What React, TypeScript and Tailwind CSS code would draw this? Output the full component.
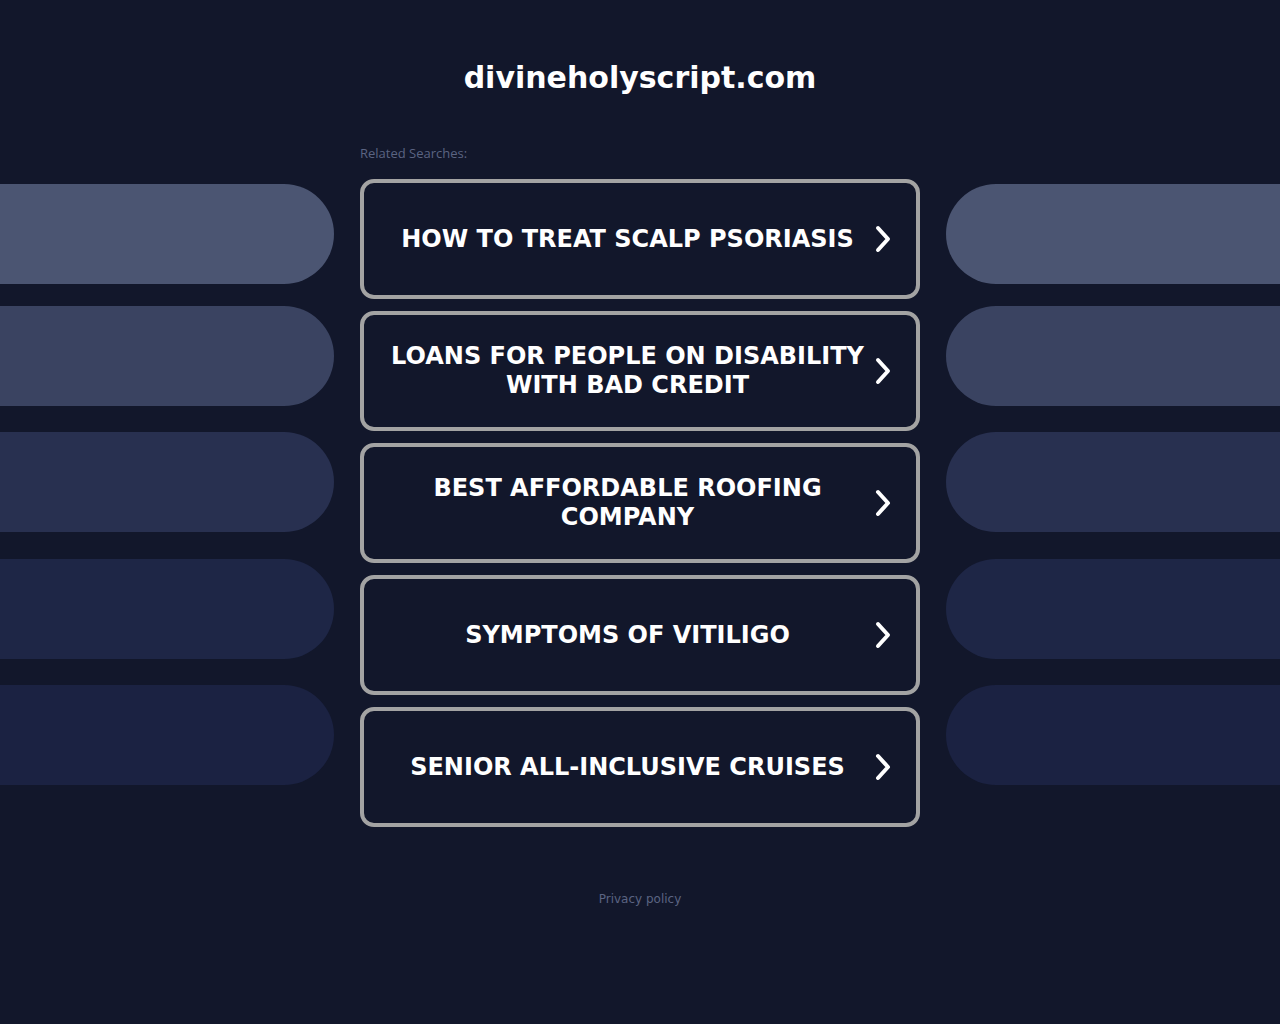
const searches = [
  "HOW TO TREAT SCALP PSORIASIS",
  "LOANS FOR PEOPLE ON DISABILITY WITH BAD CREDIT",
  "BEST AFFORDABLE ROOFING COMPANY",
  "SYMPTOMS OF VITILIGO",
  "SENIOR ALL-INCLUSIVE CRUISES",
];

const pills = [
  "bg-[#4b5572] mt-[4px]",
  "bg-[#3a4361] mt-[22px]",
  "bg-[#283050] mt-[26px]",
  "bg-[#1e2646] mt-[27px]",
  "bg-[#1b2242] mt-[26px]",
];

const Chevron = () => (
  <svg width="20" height="30" viewBox="0 0 20 30" className="shrink-0">
    <polyline
      points="5,4 15,15 5,26"
      fill="none"
      stroke="white"
      strokeWidth="4"
      strokeLinecap="round"
      strokeLinejoin="round"
    />
  </svg>
);

export default function App() {
  return (
    <div
      className="min-h-[1024px] w-full bg-[#12172b] text-white"
      style={{ fontFamily: "'DejaVu Sans', sans-serif" }}
    >
      <h1 className="pt-[59px] text-center text-[30px] font-bold leading-[38px]">
        divineholyscript.com
      </h1>
      <div className="mt-[52px] flex flex-row items-start gap-[26px]">
        <div className="flex w-[334px] flex-col pt-[31px]">
          {pills.map((c, i) => (
            <div key={i} className={`h-[100px] rounded-r-[50px] ${c}`} />
          ))}
        </div>
        <div className="flex w-[560px] flex-col">
          <div className="-mt-[3px] h-[33px] font-['Open_Sans',sans-serif] text-[13px] leading-[14px] text-[#5b6482]">
            Related Searches:
          </div>
          <div className="flex flex-col gap-[12px]">
            {searches.map((s) => (
              <a
                key={s}
                href="#"
                className="flex h-[120px] flex-row items-center rounded-[14px] border-4 border-[#a3a3a3] pl-[21px] pr-[23px]"
              >
                <span className="flex-1 text-center text-[24px] font-bold leading-[29px]">
                  {s}
                </span>
                <span className="ml-[3px]">
                  <Chevron />
                </span>
              </a>
            ))}
          </div>
        </div>
        <div className="flex w-[334px] flex-col pt-[31px]">
          {pills.map((c, i) => (
            <div key={i} className={`h-[100px] rounded-l-[50px] ${c}`} />
          ))}
        </div>
      </div>
      <div className="mt-[63px] text-center text-[12px] text-[#5b6482]">
        Privacy policy
      </div>
    </div>
  );
}
